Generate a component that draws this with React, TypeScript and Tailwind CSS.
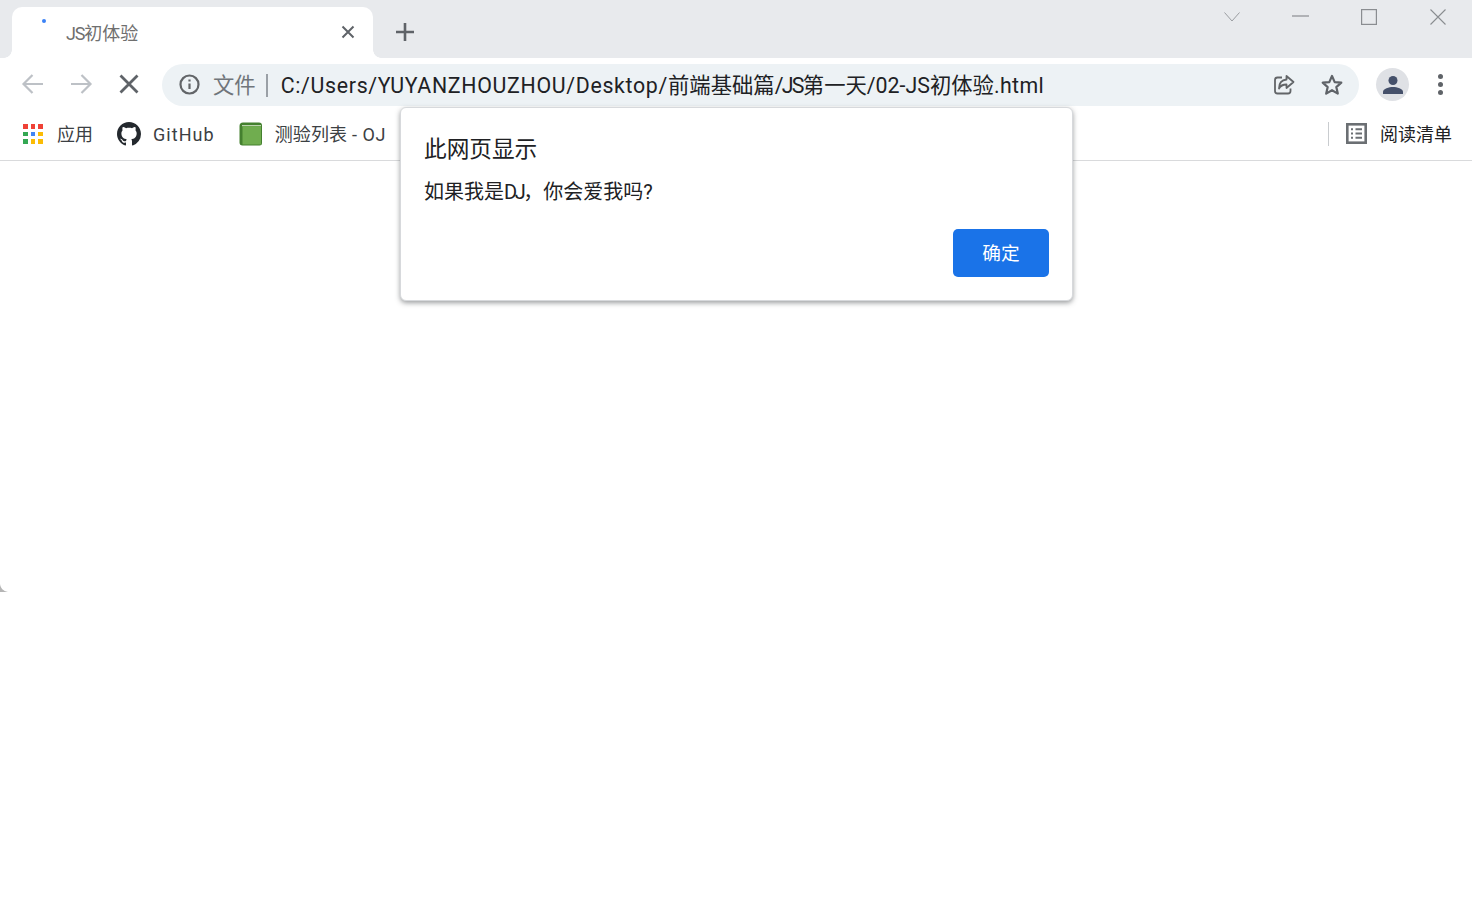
import React from "react";

const FONT = "font-['Roboto','Noto_Sans_CJK_SC',sans-serif]";

function Apps() {
  const colors = ["#ef4136", "#ef4136", "#ef4136", "#34a853", "#4285f4", "#fbbc05", "#34a853", "#fbbc05", "#fbbc05"];
  return (
    <div className="grid grid-cols-3 gap-[3px] w-[20px] h-[20px]">
      {colors.map((c, i) => (
        <span key={i} className="w-[4.6px] h-[4.6px]" style={{ backgroundColor: c }} />
      ))}
    </div>
  );
}

function GitHubMark() {
  return (
    <svg width="24" height="24" viewBox="0 0 16 16" fill="#24292e">
      <path d="M8 0C3.58 0 0 3.58 0 8c0 3.54 2.29 6.53 5.47 7.59.4.07.55-.17.55-.38 0-.19-.01-.82-.01-1.49-2.01.37-2.53-.49-2.69-.94-.09-.23-.48-.94-.82-1.13-.28-.15-.68-.52-.01-.53.63-.01 1.08.58 1.23.82.72 1.21 1.87.87 2.33.66.07-.52.28-.87.51-1.07-1.78-.2-3.64-.89-3.64-3.95 0-.87.31-1.59.82-2.15-.08-.2-.36-1.02.08-2.12 0 0 .67-.21 2.2.82.64-.18 1.32-.27 2-.27s1.36.09 2 .27c1.53-1.04 2.2-.82 2.2-.82.44 1.1.16 1.92.08 2.12.51.56.82 1.27.82 2.15 0 3.07-1.87 3.75-3.65 3.95.29.25.54.73.54 1.48 0 1.07-.01 1.93-.01 2.2 0 .21.15.46.55.38A8.01 8.01 0 0 0 16 8c0-4.42-3.58-8-8-8z" />
    </svg>
  );
}

function BookIcon() {
  return (
    <svg width="24" height="24" viewBox="0 0 24 24">
      <path d="M4 0.5h16a3 3 0 0 1 3 3V21a2.500 2.500 0 0 1-2.500 2.500H3.500A3 3 0 0 1 .5 20.500V4A3.500 3.500 0 0 1 4 .5z" fill="#44802f" />
      <path d="M3 3.200h19V4.200H3z" fill="#dbe8cf" />
      <rect x="3.500" y="4.200" width="18.500" height="18.300" fill="#70ad4f" />
    </svg>
  );
}

export default function App() {
  return (
    <div className={`relative w-[1472px] h-[922px] overflow-hidden bg-white ${FONT}`}>
      {/* tab strip */}
      <div className="h-[58px] bg-[#e8eaed] flex pt-[7px] pl-[12px]">
        <div className="relative w-[361px] h-[51px] bg-white rounded-t-[10px] flex items-center pr-[18px]">
          <span className="absolute left-[-8px] bottom-0 w-[8px] h-[8px] bg-[radial-gradient(circle_at_0_0,#e8eaed_7.5px,#ffffff_8px)]" />
          <span className="absolute right-[-8px] bottom-0 w-[8px] h-[8px] bg-[radial-gradient(circle_at_100%_0,#e8eaed_7.5px,#ffffff_8px)]" />
          <span className="absolute left-[30px] top-[12px] w-[4px] h-[4px] rounded-full bg-[#3b82f6]" />
          <span className="ml-[54px] text-[18px] leading-[24px] text-[#6f6f6f] mt-[3px] flex-1">
            <span className="tracking-[-1.2px]">JS</span>初体验
          </span>
          <svg width="14" height="14" viewBox="0 0 14 14" stroke="#5f6368" strokeWidth="2" className="-mt-[2px]">
            <path d="M1.500 1.500l11 11M12.500 1.500l-11 11" />
          </svg>
        </div>
        <div className="ml-[22px] mt-[15px] h-[20px]">
          <svg width="20" height="20" viewBox="0 0 20 20" stroke="#5f6368" strokeWidth="2.600">
            <path d="M10 1v18M1 10h18" />
          </svg>
        </div>
        <div className="ml-auto flex items-start text-[#8f9297]">
          <svg width="18" height="12" viewBox="0 0 18 12" fill="none" stroke="#9a9da1" strokeWidth="1" className="mt-[4px] mr-[51px]">
            <path d="M1.500 1.500L9 10l7.500-8.500" />
          </svg>
          <svg width="17" height="2" viewBox="0 0 17 2" stroke="#8a8d91" strokeWidth="1.200" className="mt-[8px] mr-[52px]">
            <path d="M0 1h17" />
          </svg>
          <svg width="16" height="16" viewBox="0 0 16 16" fill="none" stroke="#8a8d91" strokeWidth="1.200" className="mt-[2px] mr-[53px]">
            <rect x=".6" y=".6" width="14.800" height="14.800" />
          </svg>
          <svg width="16" height="16" viewBox="0 0 16 16" fill="none" stroke="#8a8d91" strokeWidth="1.100" className="mt-[2px] mr-[26px]">
            <path d="M.5.5l15 15M15.500.5l-15 15" />
          </svg>
        </div>
      </div>

      {/* toolbar */}
      <div className="h-[52px] flex items-center pl-[21px] pr-[24px] pt-[2px]">
        <svg width="24" height="24" viewBox="0 0 24 24" fill="none" stroke="#bdc1c6" strokeWidth="2.200" className="-mt-[2px]">
          <path d="M22 12H3M11.500 3L2.500 12l9 9" />
        </svg>
        <svg width="24" height="24" viewBox="0 0 24 24" fill="none" stroke="#bdc1c6" strokeWidth="2.200" className="ml-[24px] -mt-[2px]">
          <path d="M2 12h19M12.500 3l9 9-9 9" />
        </svg>
        <svg width="20" height="20" viewBox="0 0 20 20" stroke="#5f6368" strokeWidth="2.800" className="ml-[26px] -mt-[2px]">
          <path d="M1.500 1.500l17 17M18.500 1.500l-17 17" />
        </svg>
        <div className="ml-[23px] w-[1197px] h-[42px] rounded-full bg-[#edf2f5] flex items-center pl-[17px] pr-[15px]">
          <svg width="21" height="21" viewBox="0 0 21 21" fill="none" stroke="#626568" strokeWidth="2.200" className="-mt-[1px]">
            <circle cx="10.500" cy="10.500" r="9" />
            <path d="M10.500 9.500v5.500M10.500 5.600v2" />
          </svg>
          <span className="ml-[13px] mt-[1px] text-[21.33px] leading-[30px] text-[#70757a]">文件</span>
          <span className="ml-[10px] w-[2px] h-[23px] bg-[#9aa0a6]" />
          <span className="ml-[13px] mt-[1px] text-[21.33px] leading-[30px] text-[#202124] whitespace-nowrap flex-1">
            <span className="tracking-[0.68px]">C:/Users/YUYANZHOUZHOU/Desktop/</span>
            前端基础篇
            <span className="tracking-[-1.7px]">/JS</span>
            第一天/02-JS初体验
            <span className="tracking-[0.4px]">.html</span>
          </span>
          <svg width="22" height="22" viewBox="0 0 22 22" fill="none" stroke="#626568" strokeWidth="1.800" className="-mt-[1px]">
            <path d="M9 3.500H4.500A2.500 2.500 0 0 0 2 6v11a2.500 2.500 0 0 0 2.500 2.500H15a2.500 2.500 0 0 0 2.500-2.500v-2.500" />
            <path d="M13.500 2l7 6-7 6v-3.500c-3.500 0-6 1-7.500 4 0-5 2.500-8.500 7.500-9z" strokeLinejoin="round" />
          </svg>
          <svg width="24" height="24" viewBox="0 0 24 24" fill="none" stroke="#5f6368" strokeWidth="2.200" strokeLinejoin="round" className="ml-[25px] -mt-[1px]">
            <path d="M12 3l2.700 6.100 6.600.6-5 4.400 1.500 6.500L12 17.200l-5.800 3.400 1.500-6.500-5-4.400 6.600-.6z" />
          </svg>
        </div>
        <div className="ml-[17px] w-[33px] h-[33px] rounded-full bg-[#dfe1e5] flex items-center justify-center -mt-[1px]">
          <svg width="22" height="22" viewBox="0 0 22 22" fill="#45506a">
            <circle cx="11" cy="6.500" r="4.500" />
            <path d="M1 20v-2c0-3.500 6-5 10-5s10 1.500 10 5v2z" />
          </svg>
        </div>
        <div className="ml-[29px] flex flex-col gap-[3px] -mt-[1px]">
          <span className="w-[5px] h-[5px] rounded-full bg-[#5f6368]" />
          <span className="w-[5px] h-[5px] rounded-full bg-[#5f6368]" />
          <span className="w-[5px] h-[5px] rounded-full bg-[#5f6368]" />
        </div>
      </div>

      {/* bookmarks bar */}
      <div className="h-[51px] border-b border-[#d9dadc] flex items-center pl-[23px] pr-[20px] pb-[2px] text-[18px] leading-[24px] text-[#3c4043]">
        <Apps />
        <span className="ml-[14px] mt-[2px]">应用</span>
        <span className="ml-[24px]"><GitHubMark /></span>
        <span className="ml-[12px] mt-[2px] tracking-[1.05px]">GitHub</span>
        <span className="ml-[24px]"><BookIcon /></span>
        <span className="ml-[12px] mt-[2px] tracking-[0.1px]">测验列表<span className="tracking-[0.5px]"> - OJ</span></span>
        <span className="ml-auto w-px h-[24px] bg-[#c9cccf]" />
        <svg width="21" height="21" viewBox="0 0 21 21" fill="none" stroke="#6b6f73" strokeWidth="2.600" className="ml-[17px] -mt-[1px]">
          <rect x="1.300" y="1.300" width="18.400" height="18.400" />
          <path d="M5 6.200h2M9.500 6.200h6.500M5 10.500h2M9.500 10.500h6.500M5 14.800h2M9.500 14.800h6.500" strokeWidth="2" />
        </svg>
        <span className="ml-[13px] mt-[2px] text-[#202124]">阅读清单</span>
      </div>

      {/* dialog */}
      <div className="absolute left-[400px] top-[107px] w-[673px] h-[194px] bg-white rounded-[6px] border border-[#d7d9dc] shadow-[0_2px_5px_rgba(60,64,67,0.5)] pl-[23px] pr-[23px] pt-[25px] flex flex-col">
        <div className="text-[22.67px] leading-[34px] text-[#202124]">此网页显示</div>
        <div className="mt-[11px] text-[20px] leading-[28px] text-[#202124]">
          如果我是<span className="tracking-[-2.5px]">DJ</span>，你会爱我吗?
        </div>
        <div className="mt-auto mb-[23px] flex justify-end">
          <button className="w-[96px] h-[48px] rounded-[5px] bg-[#1a73e8] text-white text-[18.67px] leading-[26px] pt-[2px]">确定</button>
        </div>
      </div>

      {/* window corner */}
      <svg width="8" height="8" viewBox="0 0 8 8" className="absolute left-0 top-[584px]" fill="#b5b5b5">
        <path d="M0 0C.5 4 3 7 8 8H0z" />
      </svg>
    </div>
  );
}
